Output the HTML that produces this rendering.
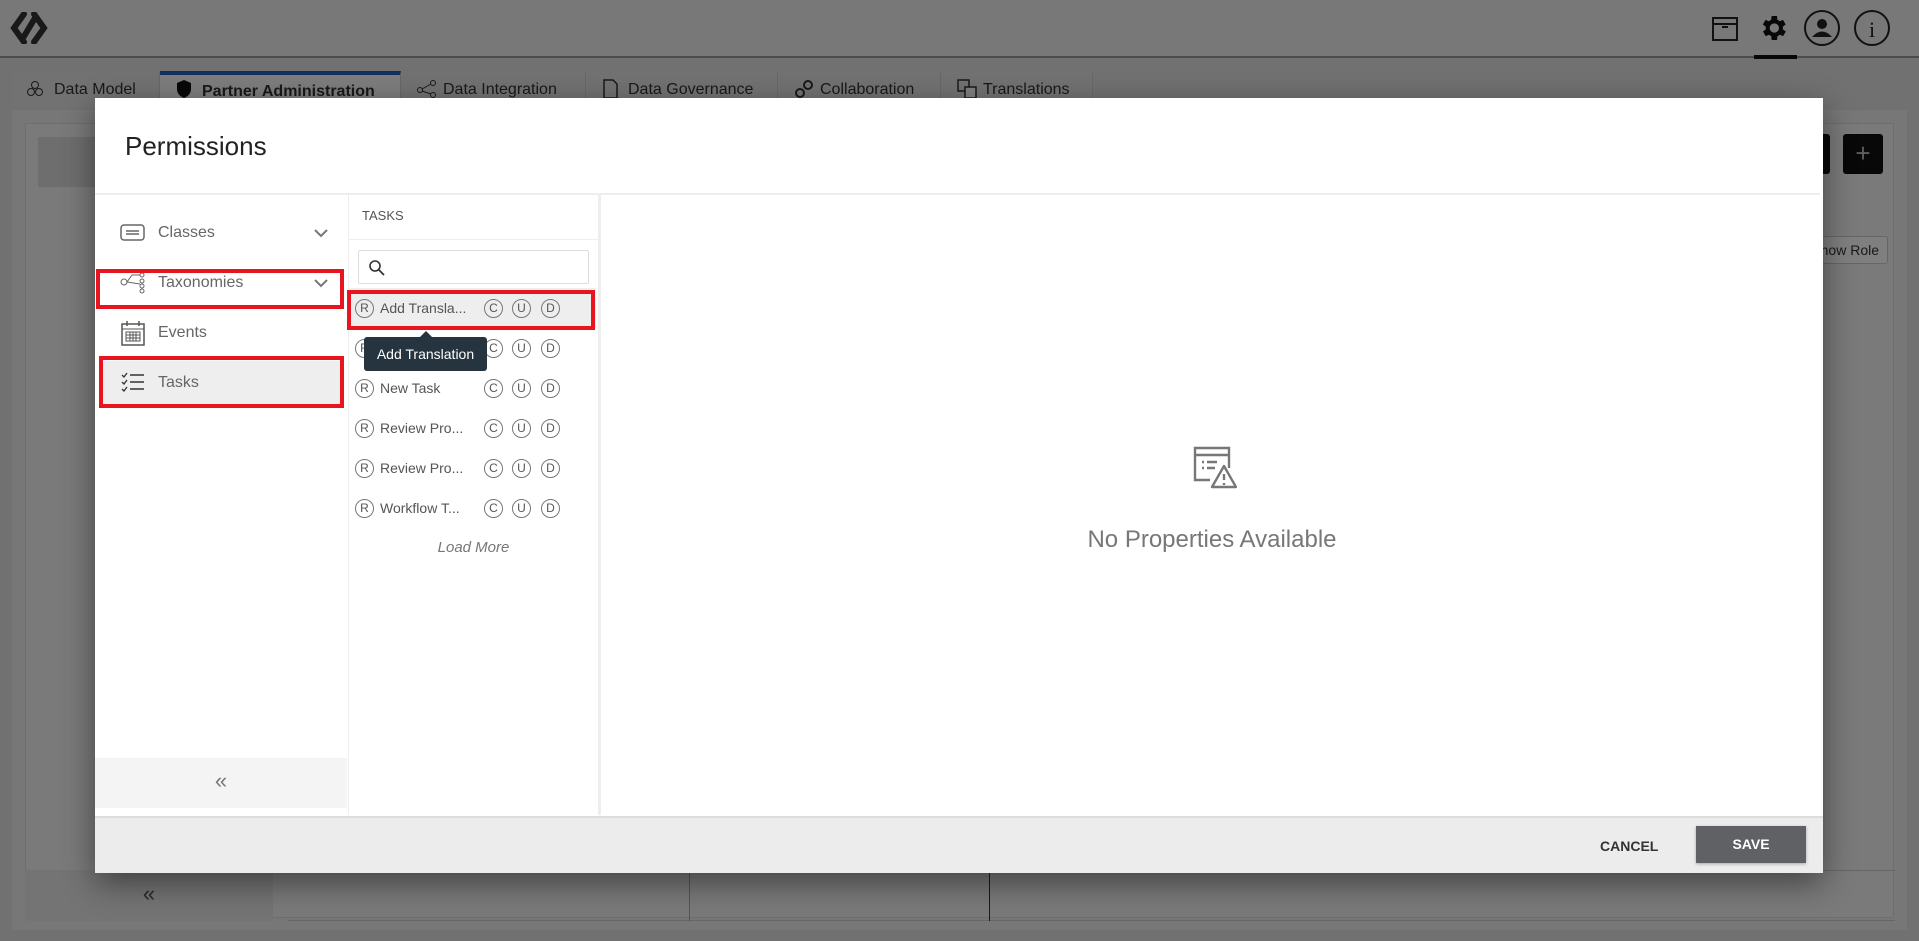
<!DOCTYPE html>
<html><head><meta charset="utf-8"><style>
*{box-sizing:border-box;margin:0;padding:0}
body{width:1919px;height:941px;overflow:hidden;position:relative;font-family:"Liberation Sans",sans-serif;background:#e2e2e2}
.a{position:absolute}
.hdr{left:0;top:0;width:1919px;height:58px;background:#f0f0f0;border-bottom:2px solid #999}
.tab{top:71px;height:37px;background:#e4e4e4;border-right:1px solid #d0d0d0;font-size:16px;color:#333;line-height:37px;padding-left:42px}
.ov{left:0;top:0;width:1919px;height:941px;background:rgba(0,0,0,0.5)}
.modal{left:95px;top:98px;width:1728px;height:775px;background:#fff;box-shadow:0 10px 30px rgba(0,0,0,.45)}
.it{left:0;width:253px;height:40px;font-size:16px;color:#666;line-height:40px;padding-left:63px}
.row{left:253px;width:248px;height:40px;font-size:14px;color:#555;line-height:40px}
.c{position:absolute;top:11px;width:19px;height:19px;border:1px solid #777;border-radius:50%;font-size:12px;line-height:17px;text-align:center;color:#555}
.red{border:4px solid #e8141f}
.chev{position:absolute;left:218px;top:14px}
</style></head><body>
<div class="a hdr"></div>
<svg class="a" style="left:8px;top:12px" width="42" height="32" viewBox="0 0 42 32"><path d="M16 2 L6 16 L16 30 M26 2 L36 16 L26 30 M27 6 L15 26" fill="none" stroke="#333" stroke-width="6" stroke-linecap="round"/></svg>
<svg class="a" style="left:1711px;top:14px" width="28" height="28"><rect x="2" y="4" width="24" height="22" fill="none" stroke="#222" stroke-width="2"/><line x1="2" y1="10" x2="26" y2="10" stroke="#222" stroke-width="2"/><rect x="11" y="12" width="6" height="2" fill="#222"/></svg>
<svg class="a" style="left:1757px;top:11px" width="32" height="34" viewBox="0 0 24 24"><path fill="#111" d="M19.4 13a7.5 7.5 0 0 0 0-2l2.1-1.6-2-3.5-2.5 1a7 7 0 0 0-1.7-1L15 3h-4l-.4 2.9a7 7 0 0 0-1.7 1l-2.5-1-2 3.5L6.6 11a7.5 7.5 0 0 0 0 2l-2.1 1.6 2 3.5 2.5-1a7 7 0 0 0 1.7 1L11 21h4l.4-2.9a7 7 0 0 0 1.7-1l2.5 1 2-3.5zM13 15.5A3.5 3.5 0 1 1 13 8.5a3.5 3.5 0 0 1 0 7z"/></svg>
<div class="a" style="left:1754px;top:55px;width:43px;height:4px;background:#111"></div>
<svg class="a" style="left:1803px;top:9px" width="38" height="38"><circle cx="19" cy="19" r="17" fill="none" stroke="#222" stroke-width="2"/><circle cx="19" cy="15" r="5" fill="#222"/><path d="M9 28 Q19 17 29 28 Z" fill="#222"/></svg>
<svg class="a" style="left:1853px;top:9px" width="38" height="38"><circle cx="19" cy="19" r="17" fill="none" stroke="#222" stroke-width="2"/><text x="19" y="28" font-size="22" text-anchor="middle" font-family="Liberation Serif" fill="#222">i</text></svg>

<div class="a tab" style="left:12px;width:148px">Data Model</div>
<div class="a tab" style="left:160px;width:241px;background:#fafafa;border-top:4px solid #2a5fc0;font-weight:bold;line-height:33px">Partner Administration</div>
<div class="a tab" style="left:401px;width:185px">Data Integration</div>
<div class="a tab" style="left:586px;width:192px">Data Governance</div>
<div class="a tab" style="left:778px;width:163px">Collaboration</div>
<div class="a tab" style="left:941px;width:152px">Translations</div>
<svg class="a" style="left:26px;top:80px" width="18" height="18"><circle cx="9" cy="5" r="3.5" fill="none" stroke="#333"/><circle cx="5" cy="12" r="3.5" fill="none" stroke="#333"/><circle cx="13" cy="12" r="3.5" fill="none" stroke="#333"/></svg>
<svg class="a" style="left:176px;top:79px" width="16" height="20"><path d="M8 1 L15 4 V10 Q15 16 8 19 Q1 16 1 10 V4Z" fill="#111"/></svg>
<svg class="a" style="left:417px;top:80px" width="20" height="18"><circle cx="3" cy="10" r="2.5" fill="none" stroke="#333"/><circle cx="16" cy="3" r="2.5" fill="none" stroke="#333"/><circle cx="16" cy="15" r="2.5" fill="none" stroke="#333"/><path d="M5 9 L14 4 M5 11 L14 14" stroke="#333"/></svg>
<svg class="a" style="left:602px;top:79px" width="16" height="20"><path d="M2 1h9l4 4v14H2z" fill="none" stroke="#333" stroke-width="1.5"/></svg>
<svg class="a" style="left:794px;top:79px" width="20" height="20"><circle cx="6" cy="14" r="4" fill="none" stroke="#333" stroke-width="2"/><circle cx="14" cy="6" r="4" fill="none" stroke="#333" stroke-width="2"/></svg>
<svg class="a" style="left:957px;top:79px" width="20" height="20"><rect x="1" y="1" width="11" height="11" fill="none" stroke="#333" stroke-width="1.5"/><rect x="8" y="8" width="11" height="11" fill="#fff" stroke="#333" stroke-width="1.5"/></svg>

<div class="a" style="left:12px;top:110px;width:1895px;height:820px;background:#efefef"></div>
<div class="a" style="left:25px;top:123px;width:1869px;height:795px;background:#f4f4f4;border:1px solid #ddd"></div>
<div class="a" style="left:38px;top:137px;width:80px;height:50px;background:#ddd"></div>
<div class="a" style="left:1843px;top:134px;width:40px;height:40px;background:#111;border-radius:3px;color:#bbb;font-size:26px;text-align:center;line-height:38px">+</div>
<div class="a" style="left:1795px;top:134px;width:35px;height:40px;background:#111;border-radius:3px"></div>
<div class="a" style="left:1800px;top:236px;width:88px;height:28px;border:1px solid #ccc;border-radius:3px;background:#fff;font-size:14px;color:#333;line-height:26px;text-align:right;padding-right:8px">Show Role</div>
<div class="a" style="left:25px;top:870px;width:248px;height:51px;background:#e8e8e8;font-size:22px;color:#555;text-align:center;line-height:48px">«</div>
<div class="a" style="left:288px;top:870px;width:1607px;height:51px;border-top:1px solid #ccc;border-bottom:1px solid #ccc"></div>
<div class="a" style="left:689px;top:870px;width:1px;height:51px;background:#aaa"></div>
<div class="a" style="left:989px;top:870px;width:1px;height:51px;background:#333"></div>
<div class="a ov"></div>

<div class="a modal">
 <div class="a" style="left:30px;top:33px;font-size:26px;color:#222">Permissions</div>
 <div class="a" style="left:0;top:95px;width:1725px;height:2px;background:#eee"></div>
 <div class="a" style="left:253px;top:97px;width:1px;height:620px;background:#eee"></div>
 <div class="a" style="left:503px;top:97px;width:3px;height:620px;background:#eee"></div>
 <!-- left -->
 <div class="a it" style="top:115px">Classes<svg class="chev" width="16" height="12"><path d="M2 3 L8 9 L14 3" fill="none" stroke="#777" stroke-width="2"/></svg></div>
 <svg class="a" style="left:25px;top:126px" width="25" height="17"><rect x="1" y="1" width="23" height="15" rx="3" fill="none" stroke="#666" stroke-width="1.5"/><line x1="6" y1="7" x2="19" y2="7" stroke="#666" stroke-width="1.5"/><line x1="6" y1="10" x2="19" y2="10" stroke="#666" stroke-width="1.5"/></svg>
 <div class="a it" style="top:165px">Taxonomies<svg class="chev" width="16" height="12"><path d="M2 3 L8 9 L14 3" fill="none" stroke="#777" stroke-width="2"/></svg></div>
 <svg class="a" style="left:25px;top:173px" width="26" height="24"><circle cx="4" cy="11" r="3" fill="none" stroke="#666"/><path d="M7 11 L12 4 L20 4 M7 11 L20 13" fill="none" stroke="#666"/><circle cx="22" cy="4" r="2" fill="none" stroke="#666"/><circle cx="22" cy="10" r="2" fill="none" stroke="#666"/><circle cx="22" cy="15" r="2" fill="none" stroke="#666"/><circle cx="22" cy="20" r="2" fill="none" stroke="#666"/></svg>
 <div class="a red" style="left:1px;top:171px;width:248px;height:40px"></div>
 <div class="a it" style="top:215px">Events</div>
 <svg class="a" style="left:26px;top:222px" width="24" height="26"><rect x="1" y="4" width="22" height="21" fill="none" stroke="#555" stroke-width="1.5"/><line x1="1" y1="9" x2="23" y2="9" stroke="#555"/><path d="M5 12h14v9H5zM5 15h14M5 18h14M9 12v9M12 12v9M15 12v9" fill="none" stroke="#555"/><path d="M6 1v5M18 1v5" stroke="#555" stroke-width="1.5"/></svg>
 <div class="a" style="left:8px;top:263px;width:239px;height:43px;background:#eee"></div>
 <div class="a it" style="top:265px">Tasks</div>
 <svg class="a" style="left:26px;top:274px" width="24" height="20"><path d="M1 3l2 2 3-4M1 10l2 2 3-4M1 17l2 2 3-4" fill="none" stroke="#333" stroke-width="1.3"/><path d="M9 3h14M9 10h14M9 17h14" stroke="#333" stroke-width="1.5"/></svg>
 <div class="a red" style="left:4px;top:258px;width:245px;height:52px"></div>
 <div class="a" style="left:0;top:660px;width:252px;height:50px;background:#f4f4f4;color:#777;font-size:22px;text-align:center;line-height:46px">«</div>
 <!-- middle -->
 <div class="a" style="left:267px;top:110px;font-size:13px;color:#555">TASKS</div>
 <div class="a" style="left:254px;top:141px;width:249px;height:1px;background:#eee"></div>
 <div class="a" style="left:263px;top:152px;width:231px;height:34px;border:1px solid #ddd;border-radius:2px"></div>
 <svg class="a" style="left:273px;top:161px" width="18" height="18"><circle cx="7" cy="7" r="5" fill="none" stroke="#333" stroke-width="1.6"/><line x1="11" y1="11" x2="16" y2="16" stroke="#333" stroke-width="1.8"/></svg>
 <div class="a row" style="top:190px;background:#eee"><span class="c" style="left:7px">R</span><span style="position:absolute;left:32px">Add Transla...</span><span class="c" style="left:136px">C</span><span class="c" style="left:164px">U</span><span class="c" style="left:193px">D</span></div>
 <div class="a red" style="left:252px;top:192px;width:248px;height:40px"></div>
 <div class="a row" style="top:230px"><span class="c" style="left:7px">R</span><span class="c" style="left:136px">C</span><span class="c" style="left:164px">U</span><span class="c" style="left:193px">D</span></div>
 <div class="a row" style="top:270px"><span class="c" style="left:7px">R</span><span style="position:absolute;left:32px">New Task</span><span class="c" style="left:136px">C</span><span class="c" style="left:164px">U</span><span class="c" style="left:193px">D</span></div>
 <div class="a row" style="top:310px"><span class="c" style="left:7px">R</span><span style="position:absolute;left:32px">Review Pro...</span><span class="c" style="left:136px">C</span><span class="c" style="left:164px">U</span><span class="c" style="left:193px">D</span></div>
 <div class="a row" style="top:350px"><span class="c" style="left:7px">R</span><span style="position:absolute;left:32px">Review Pro...</span><span class="c" style="left:136px">C</span><span class="c" style="left:164px">U</span><span class="c" style="left:193px">D</span></div>
 <div class="a row" style="top:390px"><span class="c" style="left:7px">R</span><span style="position:absolute;left:32px">Workflow T...</span><span class="c" style="left:136px">C</span><span class="c" style="left:164px">U</span><span class="c" style="left:193px">D</span></div>
 <div class="a" style="left:254px;top:441px;width:249px;text-align:center;font-size:15px;font-style:italic;color:#777">Load More</div>
 <div class="a" style="left:269px;top:239px;width:123px;height:34px;background:#25343f;border-radius:3px;color:#fff;font-size:14px;line-height:34px;text-align:center">Add Translation</div>
 <div class="a" style="left:325px;top:233px;width:0;height:0;border-left:6px solid transparent;border-right:6px solid transparent;border-bottom:6px solid #25343f"></div>
 <!-- right -->
 <svg class="a" style="left:1098px;top:348px" width="44" height="44" viewBox="0 0 44 44"><path d="M17 34H2V2h34v20" fill="none" stroke="#777" stroke-width="2.4"/><line x1="2" y1="9" x2="36" y2="9" stroke="#777" stroke-width="2.4"/><path d="M9 16h2M14 16h10M9 22h2M14 22h8" stroke="#777" stroke-width="2.4"/><path d="M31 20 L43 41 H19 Z" fill="#fff" stroke="#777" stroke-width="2.4" stroke-linejoin="round"/><path d="M31 28v6M31 37v2" stroke="#777" stroke-width="2.4"/></svg>
 <div class="a" style="left:506px;top:428px;width:1222px;text-align:center;font-size:24px;color:#777">No Properties Available</div>
 <!-- footer -->
 <div class="a" style="left:0;top:718px;width:1728px;height:57px;background:#ececec;border-top:2px solid #ddd"></div>
 <div class="a" style="left:1505px;top:740px;font-size:14px;font-weight:bold;color:#333">CANCEL</div>
 <div class="a" style="left:1601px;top:728px;width:110px;height:37px;background:#5f6165;color:#fff;font-size:14px;font-weight:bold;text-align:center;line-height:37px;box-shadow:0 1px 3px rgba(0,0,0,.3)">SAVE</div>
</div>
</body></html>
